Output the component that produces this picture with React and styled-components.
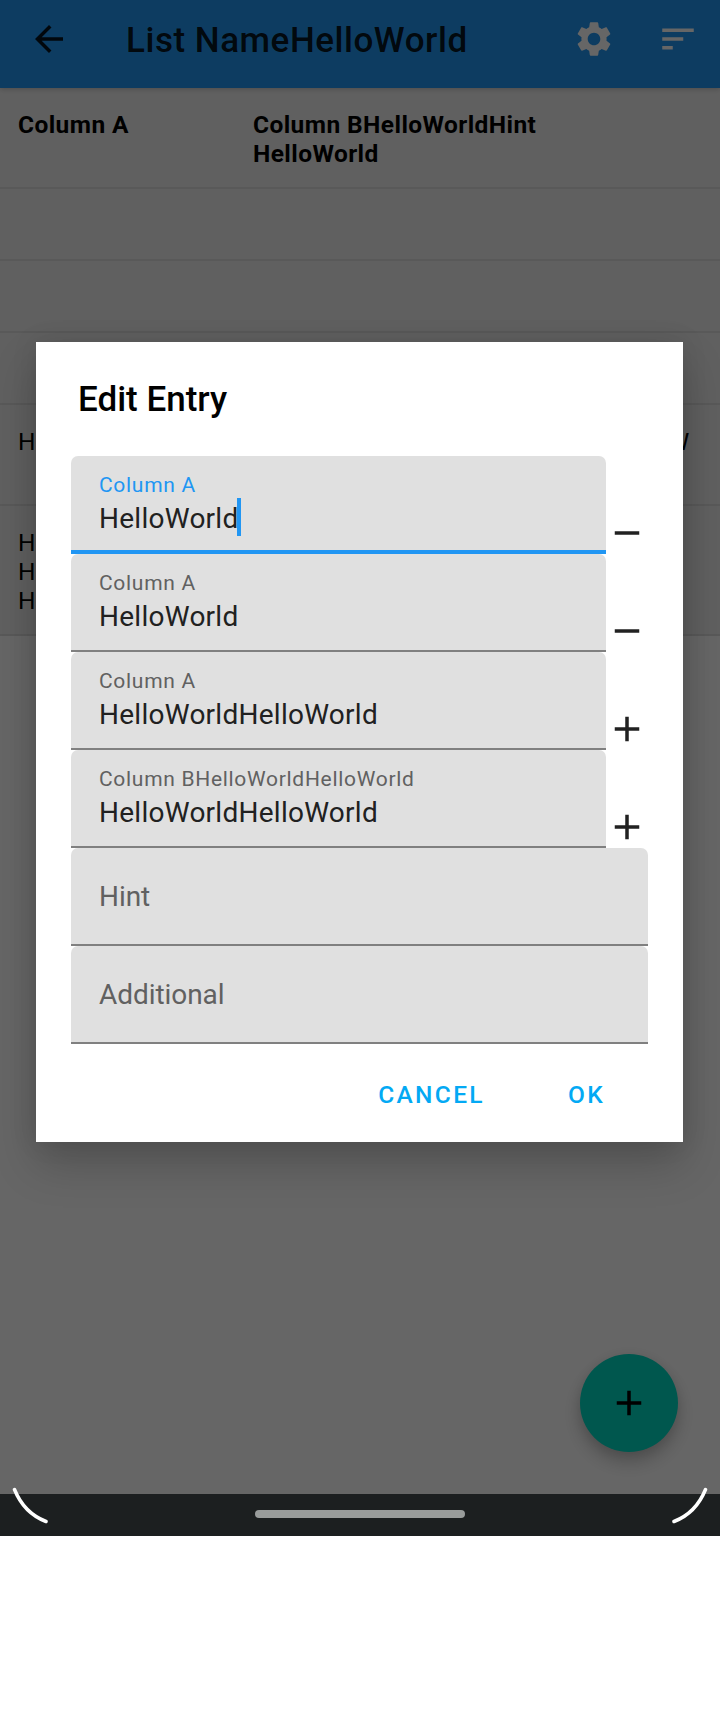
import React from "react";
import styled, { createGlobalStyle } from "styled-components";

const GlobalStyle = createGlobalStyle`
  * { box-sizing: border-box; }
  body { margin: 0; background: #fff; font-family: Roboto, "Liberation Sans", sans-serif; }
  button { font: inherit; border: 0; margin: 0; padding: 0; background: none; }
`;

const Phone = styled.div`
  position: relative;
  display: flex;
  flex-direction: column;
  width: 720px;
  height: 1536px;
  overflow: hidden;
`;

const Screen = styled.main`
  position: relative;
  height: 1494px;
  overflow: hidden;
  background: #fff;
`;

const AppBar = styled.header`
  display: flex;
  align-items: center;
  height: 88px;
  padding: 0 21px 10px 28px;
  background: #2196f3;
  box-shadow: 0 1px 5px rgba(0, 0, 0, 0.22);
  position: relative;
`;

const AppTitle = styled.h1`
  flex: 1;
  margin: 3px 0 0 56px;
  font-size: 35px;
  line-height: 42px;
  font-weight: 500;
  letter-spacing: 0.53px;
  color: rgba(0, 0, 0, 0.87);
`;

const IconButton = styled.button`
  display: flex;
  width: 42px;
  height: 42px;
  margin-left: ${(p) => p.$gap || 0}px;
  color: ${(p) => p.$color || "#fff"};
`;

const TableRow = styled.div`
  display: grid;
  grid-template-columns: 235px 445px;
  padding: 22px 18px 19px;
  min-height: ${(p) => p.$height}px;
  border-bottom: 2px solid #dedede;
  background: #f0f0f0;
  font-size: 24.5px;
  line-height: 29px;
  font-weight: ${(p) => (p.$head ? 700 : 400)};
  letter-spacing: ${(p) => (p.$head ? 0.42 : -0.03)}px;
  color: #000;
`;

const Cell = styled.div`
  white-space: pre-line;
`;

const Fab = styled.button`
  position: absolute;
  left: 580px;
  top: 1354px;
  display: flex;
  align-items: center;
  justify-content: center;
  width: 98px;
  height: 98px;
  border-radius: 50%;
  background: #00d9c3;
  color: #000;
  box-shadow: 0 10px 18px rgba(0, 0, 0, 0.22), 0 2px 12px rgba(0, 0, 0, 0.08);
`;

const Scrim = styled.div`
  position: absolute;
  inset: 0;
  padding: 342px 37px 0 36px;
  background: rgba(0, 0, 0, 0.6);
`;

const Dialog = styled.section`
  height: 800px;
  padding: 35px 35px 0;
  background: #fff;
  box-shadow: 0 22px 42px rgba(0, 0, 0, 0.2), 0 0 24px rgba(0, 0, 0, 0.1);
`;

const DialogTitle = styled.h2`
  margin: 0;
  padding: 1px 0 0 7px;
  height: 79px;
  font-size: 35px;
  line-height: 44px;
  font-weight: 500;
  letter-spacing: 0;
  color: #000;
`;

const FieldRow = styled.div`
  display: flex;
  align-items: flex-end;
  height: 98px;
`;

const Field = styled.label`
  flex: 1;
  height: 98px;
  padding: ${(p) => (p.$empty ? "30px" : "17px")} 28px 0;
  border-radius: 7px 7px 0 0;
  background: linear-gradient(
    to top,
    ${(p) => (p.$focused ? "#2196f3 4px" : "#808080 2px")},
    #e0e0e0 ${(p) => (p.$focused ? "4px" : "2px")}
  );
`;

const FieldLabel = styled.div`
  height: 27px;
  font-size: 21px;
  line-height: 25px;
  letter-spacing: 0.7px;
  color: ${(p) => (p.$focused ? "#2196f3" : "#616161")};
`;

const FieldValue = styled.div`
  display: flex;
  align-items: center;
  height: 37px;
  font-size: 28px;
  line-height: 37px;
  letter-spacing: ${(p) => (p.$placeholder ? -0.06 : 0.26)}px;
  color: ${(p) => (p.$placeholder ? "#616161" : "#212121")};
`;

const Caret = styled.span`
  width: 4px;
  height: 38px;
  margin: -3px 0 0 -1px;
  flex: none;
  background: #2196f3;
`;

const Actions = styled.div`
  display: flex;
  justify-content: flex-end;
  gap: 83px;
  padding: 35px 43px 0 0;
`;

const TextButton = styled.button`
  && {
    font-size: 24.5px;
    line-height: 32px;
    font-weight: 500;
    letter-spacing: 2.35px;
    color: #03a9f4;
  }
`;

const NavBar = styled.footer`
  display: flex;
  justify-content: center;
  align-items: center;
  height: 42px;
  padding-bottom: 2px;
  background: #1c1f20;
`;

const HomePill = styled.div`
  width: 210px;
  height: 8px;
  border-radius: 4px;
  background: #999c9b;
`;

const Corners = styled.svg`
  position: absolute;
  left: 0;
  bottom: 0;
`;

const Icon = ({ d }) => (
  <svg width="42" height="42" viewBox="0 0 24 24" fill="currentColor">
    <path d={d} />
  </svg>
);

const PATHS = {
  back: "M20 11H7.83l5.59-5.59L12 4l-8 8 8 8 1.41-1.41L7.83 13H20v-2z",
  gear: "M19.14 12.94c.04-.3.06-.61.06-.94 0-.32-.02-.64-.07-.94l2.03-1.58c.18-.14.23-.41.12-.61l-1.92-3.32c-.12-.22-.37-.29-.59-.22l-2.39.96c-.5-.38-1.03-.7-1.62-.94l-.36-2.54c-.04-.24-.24-.41-.48-.41h-3.84c-.24 0-.43.17-.47.41l-.36 2.54c-.59.24-1.13.57-1.62.94l-2.39-.96c-.22-.08-.47 0-.59.22L2.74 8.87c-.12.21-.08.47.12.61l2.03 1.58c-.05.3-.09.63-.09.94s.02.64.07.94l-2.03 1.58c-.18.14-.23.41-.12.61l1.92 3.32c.12.22.37.29.59.22l2.39-.96c.5.38 1.03.7 1.62.94l.36 2.54c.05.24.24.41.48.41h3.84c.24 0 .44-.17.47-.41l.36-2.54c.59-.24 1.13-.56 1.62-.94l2.39.96c.22.08.47 0 .59-.22l1.92-3.32c.12-.22.07-.47-.12-.61l-2.01-1.58zM12 15.6c-1.98 0-3.6-1.62-3.6-3.6s1.62-3.6 3.6-3.6 3.6 1.62 3.6 3.6-1.62 3.6-3.6 3.6z",
  sort: "M3 18h6v-2H3v2zM3 6v2h18V6H3zm0 7h12v-2H3v2z",
  plus: "M19 13h-6v6h-2v-6H5v-2h6V5h2v6h6v2z",
  minus: "M19 13H5v-2h14v2z",
};

const ROWS = [
  { head: true, height: 101, a: "Column A", b: "Column BHelloWorldHint\nHelloWorld" },
  { height: 72 },
  { height: 72 },
  { height: 72 },
  { height: 101, a: "HelloWorld", b: "HelloWorldHelloWorldHelloWorldHelloW\norld" },
  { height: 130, a: "HelloWorld\nHelloWorld\nHelloWorld", b: "HelloWorld" },
];

const FIELDS = [
  { label: "Column A", value: "HelloWorld", action: "minus", focused: true },
  { label: "Column A", value: "HelloWorld", action: "minus" },
  { label: "Column A", value: "HelloWorldHelloWorld", action: "plus" },
  { label: "Column BHelloWorldHelloWorld", value: "HelloWorldHelloWorld", action: "plus" },
  { placeholder: "Hint" },
  { placeholder: "Additional" },
];

function EntryField({ label, value, placeholder, action, focused }) {
  return (
    <FieldRow>
      <Field $empty={!!placeholder} $focused={focused}>
        {label && <FieldLabel $focused={focused}>{label}</FieldLabel>}
        <FieldValue $placeholder={!!placeholder}>
          {value || placeholder}
          {focused && <Caret />}
        </FieldValue>
      </Field>
      {action && (
        <IconButton $color="#212121" aria-label={action === "plus" ? "Add" : "Remove"}>
          <Icon d={PATHS[action]} />
        </IconButton>
      )}
    </FieldRow>
  );
}

export default function App() {
  return (
    <Phone>
      <GlobalStyle />
      <Screen>
        <AppBar>
          <IconButton $color="rgba(0,0,0,0.87)" aria-label="Back">
            <Icon d={PATHS.back} />
          </IconButton>
          <AppTitle>List NameHelloWorld</AppTitle>
          <IconButton aria-label="Settings">
            <Icon d={PATHS.gear} />
          </IconButton>
          <IconButton $gap={42} aria-label="Sort">
            <Icon d={PATHS.sort} />
          </IconButton>
        </AppBar>
        {ROWS.map((row, i) => (
          <TableRow key={i} $head={row.head} $height={row.height}>
            <Cell>{row.a}</Cell>
            <Cell>{row.b}</Cell>
          </TableRow>
        ))}
        <Fab aria-label="New entry">
          <Icon d={PATHS.plus} />
        </Fab>
        <Scrim>
          <Dialog role="dialog">
            <DialogTitle>Edit Entry</DialogTitle>
            {FIELDS.map((f, i) => (
              <EntryField key={i} {...f} />
            ))}
            <Actions>
              <TextButton>CANCEL</TextButton>
              <TextButton>OK</TextButton>
            </Actions>
          </Dialog>
        </Scrim>
      </Screen>
      <NavBar>
        <HomePill />
      </NavBar>
      <Corners width="720" height="52" fill="none" stroke="#fff" strokeWidth="3.5" strokeLinecap="round">
        <path d="M14.5 5.5Q24 29 46 37.5M705.5 5.5Q696 29 674 37.5" />
      </Corners>
    </Phone>
  );
}
